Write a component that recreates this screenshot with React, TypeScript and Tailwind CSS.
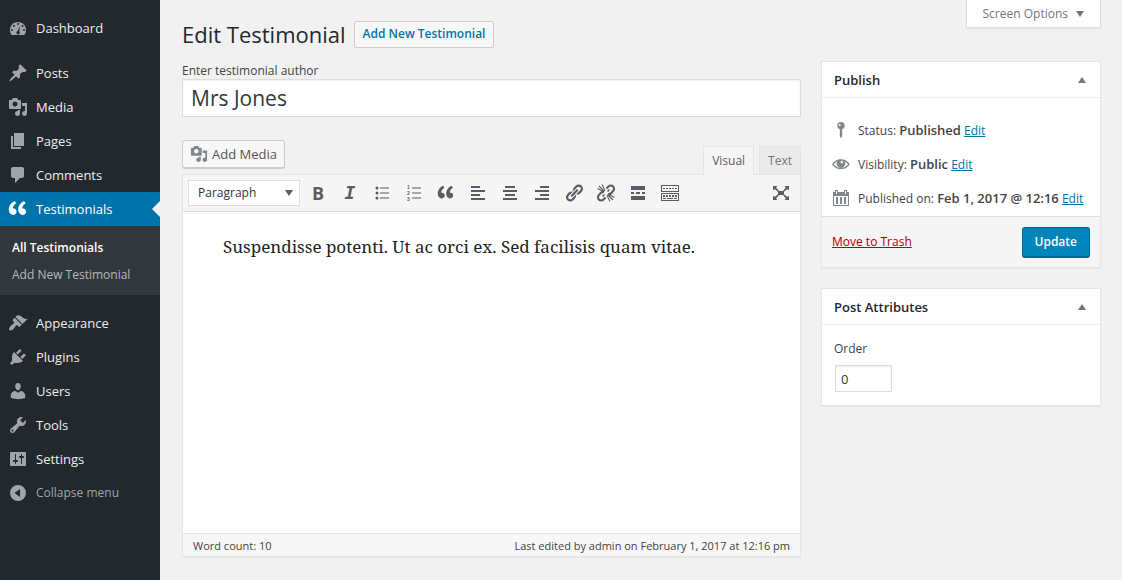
import React from "react";

const quote =
  "M8.54 12.74c0-.87-.24-1.61-.72-2.22-.73-.92-2.14-1.03-2.96-.85-.34-1.93 1.3-4.39 3.42-5.45L6.65 1.94C3.45 3.46.31 6.96.85 11.37 1.19 14.16 2.8 16 5.08 16c1 0 1.83-.29 2.48-.88.66-.59.98-1.38.98-2.38zm9.43 0c0-.87-.24-1.61-.72-2.22-.73-.92-2.14-1.03-2.96-.85-.34-1.93 1.3-4.39 3.42-5.45l-1.63-2.28c-3.2 1.52-6.34 5.02-5.8 9.43.34 2.79 1.95 4.63 4.23 4.63 1 0 1.83-.29 2.48-.88.66-.59.98-1.38.98-2.38z";

const paths = {
  dashboard:
    "M3.76 17h12.48C17.34 15.63 18 13.89 18 12c0-4.42-3.58-8-8-8s-8 3.58-8 8c0 1.89.66 3.63 1.76 5zM9 6a1 1 0 1 0 2 0 1 1 0 1 0-2 0zM5 8a1 1 0 1 0 2 0 1 1 0 1 0-2 0zM13.500 8a1 1 0 1 0 2 0 1 1 0 1 0-2 0zM3 12a1 1 0 1 0 2 0 1 1 0 1 0-2 0zM15 12a1 1 0 1 0 2 0 1 1 0 1 0-2 0zM12 8l-.7 5.500c.4.300.500.700.500 1.200a1.700 1.700 0 1 1-2.200-1.600z",
  post: "M10.44 3.02l1.82-1.82 6.36 6.35-1.83 1.82c-1.05-.68-2.48-.57-3.41.36l-.75.75c-.92.93-1.04 2.35-.35 3.41l-1.83 1.82-2.41-2.41-2.8 2.79c-.42.42-3.38 2.71-3.8 2.29s1.86-3.39 2.28-3.81l2.79-2.79L4.1 9.36l1.83-1.82c1.05.69 2.48.57 3.4-.36l.75-.75c.93-.92 1.05-2.35.36-3.41z",
  media:
    "M13 11V4c0-.55-.45-1-1-1h-1.67L9 1H5L3.67 3H2c-.55 0-1 .45-1 1v7c0 .55.45 1 1 1h10c.55 0 1-.45 1-1zM7 4.5c1.38 0 2.5 1.12 2.5 2.5S8.38 9.5 7 9.5 4.5 8.38 4.5 7 5.62 4.5 7 4.5zM14 6h5v10.5c0 1.38-1.12 2.5-2.5 2.5S14 17.88 14 16.5s1.12-2.5 2.5-2.5c.17 0 .34.02.5.05V9h-3V6zm-4 8.05V13h2v3.5c0 1.38-1.12 2.5-2.5 2.5S7 17.88 7 16.5 8.12 14 9.5 14c.17 0 .34.02.5.05z",
  page: "M6 15V2h10v13H6zm-1 1h8v2H3V5h2v11z",
  comments:
    "M5 2h9c1.1 0 2 .9 2 2v7c0 1.1-.9 2-2 2h-2l-5 5v-5H5c-1.1 0-2-.9-2-2V4c0-1.1.9-2 2-2z",
  quote,
  appearance:
    "M14.48 11.06L7.41 3.99l1.5-1.5c.5-.56 2.3-.47 3.51.32 1.21.8 1.43 1.28 2.91 2.1 1.18.64 2.45 1.26 4.45.85zm-.71.71L6.7 4.7 4.93 6.47c-.39.39-.39 1.02 0 1.41l1.06 1.06c.39.39.39 1.03 0 1.42-.6.6-1.43 1.11-2.21 1.69-.35.26-.7.53-1.01.84C1.43 14.23.4 16.08 1.4 17.07c.99 1 2.84-.03 4.18-1.36.31-.31.58-.66.85-1.02.57-.78 1.08-1.61 1.69-2.21.39-.39 1.02-.39 1.41 0l1.06 1.06c.39.39 1.02.39 1.41 0z",
  plugins:
    "M13.11 4.36L9.87 7.6 8 5.73l3.24-3.24c.35-.34 1.05-.2 1.56.32.52.51.66 1.21.31 1.55zm-8 1.77l.91-1.12 9.01 9.01-1.19.84c-.71.71-2.63 1.16-3.82 1.16H6.14L4.9 17.26c-.59.59-1.54.59-2.12 0-.59-.58-.59-1.53 0-2.12l1.24-1.24v-3.88c0-1.13.4-3.19 1.09-3.89zm7.26 3.97l3.24-3.24c.34-.35 1.04-.21 1.55.31.52.51.66 1.21.31 1.55l-3.24 3.25z",
  users:
    "M10 9.25c-2.27 0-2.73-3.44-2.73-3.44C7 4.02 7.82 2 9.97 2c2.16 0 2.98 2.02 2.71 3.81 0 0-.41 3.44-2.68 3.44zm0 2.57L12.72 10c2.39 0 4.52 2.33 4.52 4.53v2.49s-3.65 1.13-7.24 1.13c-3.65 0-7.24-1.13-7.24-1.13v-2.49c0-2.25 1.94-4.48 4.47-4.48z",
  tools:
    "M16.68 9.77c-1.34 1.34-3.3 1.67-4.95.99l-5.41 6.52c-.99.99-2.59.99-3.58 0s-.99-2.59 0-3.57l6.52-5.42c-.68-1.65-.35-3.61.99-4.95 1.28-1.28 3.12-1.62 4.72-1.06l-2.89 2.89 2.82 2.82 2.86-2.87c.53 1.58.18 3.39-1.08 4.65zM3.81 16.21c.4.39 1.04.39 1.43 0 .4-.4.4-1.04 0-1.43-.39-.4-1.03-.4-1.43 0-.39.39-.39 1.03 0 1.43z",
  settings:
    "M18 16V4c0-.55-.45-1-1-1H3c-.55 0-1 .45-1 1v12c0 .55.45 1 1 1h14c.55 0 1-.45 1-1zM8 11h1c.55 0 1 .45 1 1s-.45 1-1 1H8v1.5c0 .28-.22.5-.5.5s-.5-.22-.5-.5V13H6c-.55 0-1-.45-1-1s.45-1 1-1h1V5.5c0-.28.22-.5.5-.5s.5.22.5.5V11zm5-2h-1c-.55 0-1-.45-1-1s.45-1 1-1h1V5.5c0-.28.22-.5.5-.5s.5.22.5.5V7h1c.55 0 1 .45 1 1s-.45 1-1 1h-1v5.5c0 .28-.22.5-.5.5s-.5-.22-.5-.5V9z",
  collapse: "M2 10a8 8 0 1 0 16 0 8 8 0 1 0-16 0zM12 6v8L6.500 10z",
  ul: "M5 6.500a1.500 1.500 0 1 1 0-3 1.500 1.500 0 0 1 0 3zM8 4.500h9v1H8zM5 11.500a1.500 1.500 0 1 1 0-3 1.500 1.500 0 0 1 0 3zM8 9.500h9v1H8zM5 16.500a1.500 1.500 0 1 1 0-3 1.500 1.500 0 0 1 0 3zM8 14.500h9v1H8z",
  left: "M3 3h9v2H3zM3 7h14v2H3zM3 11h9v2H3zM3 15h14v2H3z",
  center: "M5 3h10v2H5zM3 7h14v2H3zM5 11h10v2H5zM3 15h14v2H3z",
  right: "M8 3h9v2H8zM3 7h14v2H3zM8 11h9v2H8zM3 15h14v2H3z",
  link: "M17.74 2.76c1.68 1.69 1.68 4.41 0 6.1l-1.53 1.52c-1.12 1.12-2.7 1.47-4.14 1.09l2.62-2.61.76-.77.76-.76c.84-.84.84-2.2 0-3.04-.84-.85-2.2-.85-3.04 0l-.77.76-3.38 3.38c-.37-1.44-.02-3.02 1.1-4.14l1.52-1.53c1.69-1.68 4.42-1.68 6.1 0zM8.59 13.43l5.34-5.34c.42-.42.42-1.1 0-1.52-.44-.43-1.13-.39-1.53 0l-5.33 5.34c-.42.42-.42 1.1 0 1.52.44.43 1.13.39 1.52 0zm-.76 2.29l4.14-4.15c.38 1.44.03 3.02-1.09 4.14l-1.52 1.53c-1.69 1.68-4.41 1.68-6.1 0-1.68-1.68-1.68-4.42 0-6.1l1.53-1.52c1.12-1.12 2.7-1.47 4.14-1.1l-4.14 4.15c-.85.84-.85 2.2 0 3.05.84.84 2.2.84 3.04 0z",
  more: "M17 7V3H3v4h14zM6 11V9H3v2h3zm6 0V9H8v2h4zm5 0V9h-3v2h3zm0 6v-4H3v4h14z",
  sink: "M1 2h18v7H1zM2 3v5h16V3zM3 5h2v1H3zM6 5h2v1H6zM9 5h2v1H9zM12 5h2v1h-2zM15 5h2v1h-2zM1 10h18v8H1zM2 11v6h16v-6zM3 12h2v2H3zM6 12h2v2H6zM9 12h2v2H9zM12 12h2v2h-2zM15 12h2v2h-2zM3 15h3v1H3zM7 15h6v1H7zM14 15h3v1h-3z",
  expand:
    "M2 3h4.500L5 4.500 8 8h4l3-3.500L13.500 3H18v4.500L16.500 6 13 8.700v2.600l3.500 2.700 1.500-1.500V17h-4.500l1.500-1.500-3-3.500H8l-3 3.500L6.500 17H2v-4.500L3.500 14 7 11.300V8.700L3.500 6 2 7.500z",
  pin: "M10 2a3.700 3.700 0 0 1 1.200 7.200V16L10 18.500 8.800 16V9.200A3.700 3.700 0 0 1 10 2zM8.700 3.900a1 1 0 1 0 0 2 1 1 0 0 0 0-2z",
  eye: "M18.300 9.500C15 4.900 8.500 3.800 3.900 7.200 3 7.800 2.200 8.600 1.500 9.500l-.5.700.5.700c3.300 4.600 9.800 5.700 14.400 2.300.900-.6 1.700-1.400 2.400-2.300l.5-.7zM9.900 7.200c.500-.5 1.300-.5 1.800 0s.5 1.300 0 1.800-1.300.5-1.800 0-.5-1.300 0-1.800zM9.900 13.800c-4 0-6.300-2.600-7.300-3.600.9-1 2.100-2.100 3.600-2.800-.4.600-.6 1.300-.6 2a4.300 4.300 0 0 0 8.600 0c0-.7-.2-1.400-.6-2 1.500.7 2.700 1.800 3.600 2.800-.9 1-3.300 3.600-7.300 3.600z",
  calendar:
    "M2 4h2V2h3v2h6V2h3v2h2v14H2zM5 3v3h1V3zM14 3v3h1V3zM3 8v9h14V8zM5 9h2v7H5zM9 9h2v7H9zM13 9h2v7h-2z",
};

function Icon({ name, className }: { name: keyof typeof paths; className: string }) {
  return (
    <svg viewBox="0 0 20 20" aria-hidden="true" className={className}>
      <path d={paths[name]} fill="currentColor" fillRule="evenodd" />
    </svg>
  );
}

function MenuLink({ icon, label }: { icon: keyof typeof paths; label: string }) {
  return (
    <li>
      <a href="#" className="flex h-[34px] items-center gap-2 pl-2 text-[13px] text-[#eeeeee]">
        <Icon name={icon} className="size-5 text-[#a0a5aa]" />
        {label}
      </a>
    </li>
  );
}

function ToolButton({ label, children }: { label: string; children: React.ReactNode }) {
  return (
    <button type="button" aria-label={label} className="flex size-7 items-center justify-center text-[#555d66]">
      {children}
    </button>
  );
}

function PanelHeader({ title }: { title: string }) {
  return (
    <div className="flex h-9 items-center justify-between border-b border-[#eeeeee] pl-3 pr-3.5">
      <h2 className="text-[13px] font-semibold text-[#23282d]">{title}</h2>
      <button type="button" aria-label={`Toggle panel: ${title}`}>
        <svg viewBox="0 0 8 6" className="h-1.5 w-2" aria-hidden="true">
          <path d="M4 0l4 6H0z" fill="#72777c" />
        </svg>
      </button>
    </div>
  );
}

function Sidebar() {
  return (
    <nav aria-label="Main menu" className="w-40 shrink-0 bg-[#23282d] pt-[11px]">
      <ul>
        <MenuLink icon="dashboard" label="Dashboard" />
      </ul>
      <ul className="mt-[11px]">
        <MenuLink icon="post" label="Posts" />
        <MenuLink icon="media" label="Media" />
        <MenuLink icon="page" label="Pages" />
        <MenuLink icon="comments" label="Comments" />
        <li>
          <a href="#" aria-current="page" className="flex h-[34px] items-center gap-2 bg-[#0073aa] pl-2 text-[13px] text-white">
            <Icon name="quote" className="size-5" />
            <span className="flex-1">Testimonials</span>
            <svg viewBox="0 0 8 16" className="h-4 w-2 text-[#f1f1f1]" aria-hidden="true">
              <path d="M8 0v16L0 8z" fill="currentColor" />
            </svg>
          </a>
          <ul className="bg-[#32373c] pb-[7px] pl-3 pt-2">
            <li>
              <a href="#" className="flex h-[27px] items-center font-semibold text-white">All Testimonials</a>
            </li>
            <li>
              <a href="#" className="flex h-[27px] items-center text-[#b4b9be]">Add New Testimonial</a>
            </li>
          </ul>
        </li>
      </ul>
      <ul className="mt-[11px]">
        <MenuLink icon="appearance" label="Appearance" />
        <MenuLink icon="plugins" label="Plugins" />
        <MenuLink icon="users" label="Users" />
        <MenuLink icon="tools" label="Tools" />
        <MenuLink icon="settings" label="Settings" />
      </ul>
      <button type="button" className="flex h-[34px] items-center gap-2 pl-2 text-[#a0a5aa]">
        <Icon name="collapse" className="size-5" />
        Collapse menu
      </button>
    </nav>
  );
}

function Editor() {
  return (
    <section aria-label="Testimonial text">
      <div className="flex items-end justify-between">
        <button type="button" className="mb-[5px] flex h-[29px] items-center gap-1 rounded-[3px] border border-b-2 border-[#cccccc] bg-[#f7f7f7] px-[7px] text-[13px] text-[#555555]">
          <Icon name="media" className="size-[18px] text-[#82878c]" />
          Add Media
        </button>
        <div role="tablist" className="flex gap-[5px] text-[#555d66]">
          <button type="button" role="tab" aria-selected="true" className="relative -mb-px h-[29px] border border-b-0 border-[#e5e5e5] bg-[#f5f5f5] px-2">
            Visual
          </button>
          <button type="button" role="tab" aria-selected="false" className="h-7 border border-b-0 border-[#e5e5e5] bg-[#ebebeb] px-2 text-[#72777c]">
            Text
          </button>
        </div>
      </div>
      <div className="border border-[#e5e5e5] shadow-[0_1px_1px_rgba(0,0,0,0.04)]">
        <div role="toolbar" aria-label="Formatting" className="flex h-[37px] items-center border-b border-[#dddddd] bg-[#f5f5f5] px-[5px]">
          <div className="relative mr-1">
            <select aria-label="Block format" className="h-[26px] w-28 appearance-none border border-[#dddddd] bg-white pl-[9px] text-[#32373c]">
              <option>Paragraph</option>
            </select>
            <svg viewBox="0 0 8 6" className="pointer-events-none absolute right-[7px] top-2.5 h-1.5 w-2" aria-hidden="true">
              <path d="M0 0h8L4 6z" fill="#555d66" />
            </svg>
          </div>
          <div className="flex gap-1">
            <ToolButton label="Bold"><span className="text-lg font-bold">B</span></ToolButton>
            <ToolButton label="Italic">
              <span className="font-['DejaVu_Sans_Mono',monospace] text-lg font-bold italic">I</span>
            </ToolButton>
            <ToolButton label="Bulleted list"><Icon name="ul" className="size-5" /></ToolButton>
            <ToolButton label="Numbered list">
              <svg viewBox="0 0 20 20" className="size-5 font-['Liberation_Sans',sans-serif] text-[5px] font-bold" fill="currentColor" aria-hidden="true">
                <path d="M8 4.500h9v1H8zM8 9.500h9v1H8zM8 14.500h9v1H8z" />
                <text x="3" y="6">1</text>
                <text x="3" y="12">2</text>
                <text x="3" y="18">3</text>
              </svg>
            </ToolButton>
            <ToolButton label="Blockquote"><Icon name="quote" className="size-[18px]" /></ToolButton>
            <ToolButton label="Align left"><Icon name="left" className="size-5" /></ToolButton>
            <ToolButton label="Align center"><Icon name="center" className="size-5" /></ToolButton>
            <ToolButton label="Align right"><Icon name="right" className="size-5" /></ToolButton>
            <ToolButton label="Insert link"><Icon name="link" className="size-5" /></ToolButton>
            <ToolButton label="Remove link">
              <svg viewBox="0 0 20 20" className="size-5" fill="none" stroke="currentColor" aria-hidden="true">
                <path strokeWidth="2.100" d="M10.500 5.500l2-2a3.200 3.200 0 0 1 4.600 4.600l-2.300 2.300c-.8.700-1.800.9-2.800.6M9.500 14.500l-2 2a3.200 3.200 0 0 1-4.600-4.600l2.300-2.300c.8-.7 1.800-.9 2.800-.6" />
                <path strokeWidth="1.100" d="M1.500 5.500l6 3M3 3l5.500 5.500M6 1.500l3 6M18.500 14.500l-6-3M17 17l-5.500-5.500M14 18.500l-3-6" />
                <path strokeWidth="1.500" d="M6.500 13.500L8.500 11.500M11.500 8.500l2-2" />
              </svg>
            </ToolButton>
            <ToolButton label="Insert Read More tag"><Icon name="more" className="size-5" /></ToolButton>
            <ToolButton label="Toolbar toggle"><Icon name="sink" className="size-5" /></ToolButton>
          </div>
          <div className="ml-auto">
            <ToolButton label="Distraction-free writing mode"><Icon name="expand" className="size-5" /></ToolButton>
          </div>
        </div>
        <div role="textbox" aria-label="Content" contentEditable suppressContentEditableWarning className="min-h-[321px] bg-white px-10 pt-[21px] font-['Noto_Serif','Liberation_Serif',serif] text-[17px] leading-7 text-[#222222]">
          <p>Suspendisse potenti. Ut ac orci ex. Sed facilisis quam vitae.</p>
        </div>
        <div className="flex h-[23px] items-center justify-between border-t border-[#e5e5e5] bg-[#f7f7f7] px-2.5 pt-px text-[11px]">
          <span>Word count: 10</span>
          <span>Last edited by admin on February 1, 2017 at 12:16 pm</span>
        </div>
      </div>
    </section>
  );
}

function StatusRow({ icon, label, value }: { icon: keyof typeof paths; label: string; value: string }) {
  return (
    <div className="flex h-[34px] items-center gap-[7px] pl-[9px]">
      <Icon name={icon} className="size-5 text-[#82878c]" />
      <p className="whitespace-nowrap">
        {label}: <b className="text-[13px] font-semibold">{value}</b>{" "}
        <a href="#" className="text-[#0073aa] underline">Edit</a>
      </p>
    </div>
  );
}

export default function App() {
  return (
    <div className="flex min-h-screen bg-[#f1f1f1] font-['Open_Sans','Noto_Sans',sans-serif] text-[12px] leading-[18px] text-[#444444]">
      <Sidebar />
      <main className="flex min-w-0 flex-1 items-start gap-5 pl-[22px] pr-[21px]">
        <div className="min-w-0 flex-1 pt-5">
          <div className="flex items-center gap-2">
            <h1 className="text-[22px] leading-7 text-[#23282d]">Edit Testimonial</h1>
            <a href="#" className="flex h-[27px] items-center rounded-xs border border-[#cccccc] bg-[#f7f7f7] px-2 font-semibold text-[#0073aa]">
              Add New Testimonial
            </a>
          </div>
          <label htmlFor="author" className="mt-3.5 block leading-[17px]">Enter testimonial author</label>
          <input id="author" type="text" defaultValue="Mrs Jones" className="mb-[23px] block h-[38px] w-full border border-[#dddddd] bg-white px-2 text-[21px] leading-7 text-[#32373c] shadow-[inset_0_1px_2px_rgba(0,0,0,0.07)]" />
          <Editor />
        </div>
        <aside className="w-[280px] shrink-0">
          <div className="flex justify-end">
            <button type="button" className="flex h-7 items-center gap-2 border border-t-0 border-[#dddddd] bg-white px-4 text-[#72777c] shadow-[0_1px_1px_rgba(0,0,0,0.04)]">
              Screen Options
              <svg viewBox="0 0 8 6" className="h-1.5 w-2" aria-hidden="true">
                <path d="M0 0h8L4 6z" fill="#72777c" />
              </svg>
            </button>
          </div>
          <section className="mt-[33px] border border-[#e5e5e5] bg-white shadow-[0_1px_1px_rgba(0,0,0,0.04)]">
            <PanelHeader title="Publish" />
            <div className="pb-px pt-[15px]">
              <StatusRow icon="pin" label="Status" value="Published" />
              <StatusRow icon="eye" label="Visibility" value="Public" />
              <StatusRow icon="calendar" label="Published on" value="Feb 1, 2017 @ 12:16" />
            </div>
            <div className="flex h-[51px] items-center justify-between border-t border-[#dddddd] bg-[#f5f5f5] px-2.5">
              <a href="#" className="text-[#aa0000] underline">Move to Trash</a>
              <button type="button" className="h-[31px] rounded-[3px] border border-b-2 border-[#006799] bg-[#0085ba] px-3 font-semibold text-white">
                Update
              </button>
            </div>
          </section>
          <section className="mt-5 border border-[#e5e5e5] bg-white shadow-[0_1px_1px_rgba(0,0,0,0.04)]">
            <PanelHeader title="Post Attributes" />
            <div className="px-3 pb-[13px] pt-3.5">
              <label htmlFor="order" className="block leading-5">Order</label>
              <input id="order" type="text" defaultValue="0" className="ml-px mt-1.5 block h-[27px] w-[57px] border border-[#dddddd] px-[5px] text-[13px] text-[#32373c] shadow-[inset_0_1px_2px_rgba(0,0,0,0.07)]" />
            </div>
          </section>
        </aside>
      </main>
    </div>
  );
}
